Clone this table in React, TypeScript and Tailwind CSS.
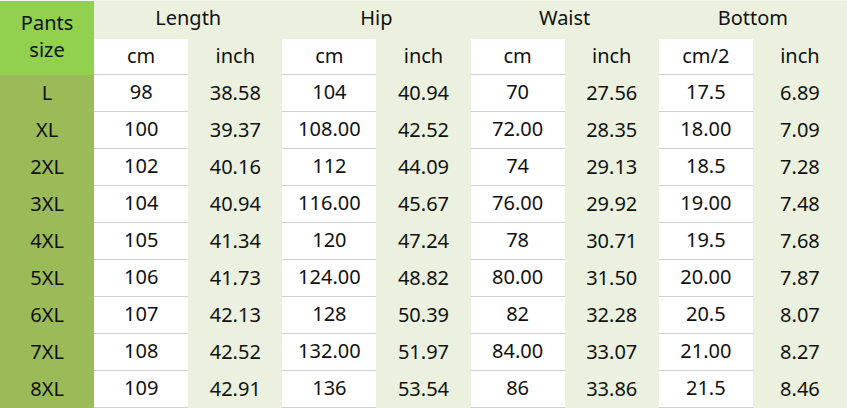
const rows: string[][] = [
  ["L", "98", "38.58", "104", "40.94", "70", "27.56", "17.5", "6.89"],
  ["XL", "100", "39.37", "108.00", "42.52", "72.00", "28.35", "18.00", "7.09"],
  ["2XL", "102", "40.16", "112", "44.09", "74", "29.13", "18.5", "7.28"],
  ["3XL", "104", "40.94", "116.00", "45.67", "76.00", "29.92", "19.00", "7.48"],
  ["4XL", "105", "41.34", "120", "47.24", "78", "30.71", "19.5", "7.68"],
  ["5XL", "106", "41.73", "124.00", "48.82", "80.00", "31.50", "20.00", "7.87"],
  ["6XL", "107", "42.13", "128", "50.39", "82", "32.28", "20.5", "8.07"],
  ["7XL", "108", "42.52", "132.00", "51.97", "84.00", "33.07", "21.00", "8.27"],
  ["8XL", "109", "42.91", "136", "53.54", "86", "33.86", "21.5", "8.46"],
];

const groups = ["Length", "Hip", "Waist", "Bottom"];
const units = ["cm", "inch", "cm", "inch", "cm", "inch", "cm/2", "inch"];

export default function App() {
  return (
    <div
      className="h-[408px] w-[847px] overflow-hidden bg-[#ebf1de] text-[20px] text-[#111]"
      style={{ fontFamily: '"Noto Sans", sans-serif' }}
    >
      <div className="grid grid-cols-9 grid-rows-[38px_36px_repeat(9,37px)] border-t border-t-[#f3f6ea]">
        {/* header */}
        <div className="row-span-2 flex flex-col items-center justify-center bg-[#92d050] pb-1 leading-[27px]">
          <span>Pants</span>
          <span>size</span>
        </div>
        {groups.map((g) => (
          <div key={g} className="col-span-2 flex items-center justify-center pb-1">
            {g}
          </div>
        ))}
        {units.map((u, i) => (
          <div
            key={i}
            className={
              i % 2 === 0
                ? "flex items-center justify-center border-b border-[#d2d2d2] bg-white pb-0.5"
                : "flex items-center justify-center pb-0.5"
            }
          >
            {u}
          </div>
        ))}

        {/* body */}
        {rows.map((r) =>
          r.map((v, i) => (
            <div
              key={r[0] + i}
              className={
                i === 0
                  ? "flex items-center justify-center bg-[#9bbb59] pb-0.5"
                  : i % 2 === 1
                    ? "flex items-center justify-center border-b border-[#d2d2d2] bg-white pb-0.5"
                    : "flex items-center justify-center pb-0.5"
              }
            >
              {v}
            </div>
          )),
        )}
      </div>
    </div>
  );
}
